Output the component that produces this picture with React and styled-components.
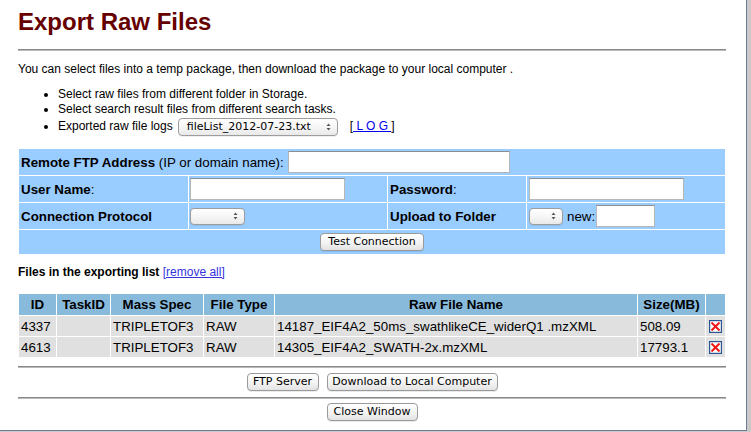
import React from "react";
import styled, { createGlobalStyle } from "styled-components";

const Global = createGlobalStyle`
  html, body { margin: 0; padding: 0; background: #c9c9c9; }
  body { font-family: "Liberation Sans", Arial, Helvetica, sans-serif; color: #000; }
`;

const Frame = styled.div`
  box-sizing: border-box;
  width: 747px;
  height: 431px;
  background: #fff;
  border-right: 1px solid #6e7c94;
  border-bottom: 1px solid #6e7c94;
  padding: 0 20px 0 18px;
  overflow: hidden;
`;

const Title = styled.h1`
  margin: 0;
  padding-top: 8px;
  font: bold 24px/28px "Liberation Sans", Arial, sans-serif;
  color: #660000;
`;

const Rule = styled.hr`
  margin: ${(p) => p.$top}px 0 0;
  height: 0;
  border: 0;
  border-top: 1px solid #8a8a8a;
  border-bottom: 1px solid #b9b9b9;
`;

const Intro = styled.p`
  margin: 11px 0 0;
  font-size: 12px;
  line-height: 15px;
`;

const BulletList = styled.ul`
  margin: 10px 0 0;
  padding-left: 40px;
  font-size: 12px;
  line-height: 15px;
  list-style: disc;
`;

const Bullet = styled.li`
  line-height: ${(p) => (p.$tall ? 19 : 15)}px;
`;

const Popup = styled.span`
  display: inline-flex;
  align-items: center;
  justify-content: space-between;
  box-sizing: border-box;
  width: ${(p) => p.$w}px;
  height: ${(p) => p.$h}px;
  margin-left: ${(p) => p.$ml || 0}px;
  padding: 0 6px 0 8px;
  border: 1px solid #9d9d9d;
  border-radius: 4px;
  background: linear-gradient(#ffffff, #f6f6f6 50%, #e9e9e9);
  font: 11px/1 "DejaVu Sans", Verdana, sans-serif;
  color: #000;
  vertical-align: middle;
  box-shadow: 0 1px 0 rgba(0, 0, 0, 0.06);
`;

const PopupText = styled.span`
  white-space: nowrap;
`;

const Arrows = () => (
  <svg width="5" height="8" viewBox="0 0 5 8" style={{ marginLeft: "auto" }}>
    <path d="M2.5 0.5 L4.5 3 L0.5 3 Z" fill="#555" />
    <path d="M2.5 7.5 L4.5 5 L0.5 5 Z" fill="#555" />
  </svg>
);

const LogLink = styled.span`
  margin-left: 12px;
`;

const Link = styled.a`
  color: ${(p) => p.$color || "#0000ee"};
  text-decoration: underline;
  cursor: pointer;
`;

const FormGrid = styled.div`
  margin-top: 12px;
  display: grid;
  grid-template-columns: 169px 198px 138px 1fr;
  grid-template-rows: 26px 26px 26px 24px;
  gap: 1px;
  padding: 1px;
  background: #fff;
  font-size: 13.33px;
`;

const Cell = styled.div`
  background: #99ccff;
  display: flex;
  align-items: center;
  justify-content: ${(p) => (p.$center ? "center" : "flex-start")};
  padding: 0 2px 0 ${(p) => (p.$pl != null ? p.$pl : 2)}px;
  grid-column: ${(p) => (p.$span ? "1 / -1" : "auto")};
  white-space: nowrap;
`;

const Strong = styled.b`
  font-weight: bold;
`;

const TextInput = styled.input`
  box-sizing: border-box;
  width: ${(p) => p.$w}px;
  height: 22px;
  margin: 0 0 0 ${(p) => p.$ml || 0}px;
  padding: 0 2px;
  border: 1px solid #b7b7b7;
  border-top-color: #8f8f8f;
  background: #fff;
  font: 12px "Liberation Sans", Arial, sans-serif;
`;

const NewLabel = styled.span`
  margin-left: 4px;
  margin-right: 1px;
`;

const MacButton = styled.button`
  box-sizing: border-box;
  width: ${(p) => p.$w}px;
  height: 18px;
  padding: 0;
  border: 1px solid #9a9a9a;
  border-radius: 4px;
  background: linear-gradient(#ffffff, #f3f3f3 55%, #e3e3e3);
  font: 11px/16px "DejaVu Sans", Verdana, sans-serif;
  color: #000;
  white-space: nowrap;
  box-shadow: 0 1px 0 rgba(0, 0, 0, 0.08);
`;

const ListHeading = styled.div`
  margin-top: 10px;
  font-size: 12px;
  line-height: 15px;
`;

const DataTable = styled.table`
  margin-top: 13px;
  width: 708px;
  border-collapse: separate;
  border-spacing: 1px;
  table-layout: fixed;
  font-size: 13.33px;
`;

const Th = styled.th`
  background: #88badc;
  height: 21px;
  padding: 0 2px;
  font-weight: bold;
  text-align: center;
  white-space: nowrap;
`;

const Td = styled.td`
  background: #e0e0e0;
  height: 20px;
  padding: 0 2px;
  white-space: nowrap;
  text-align: ${(p) => (p.$center ? "center" : "left")};
  line-height: 0;
  & > span { line-height: 15px; }
`;

const DeleteIcon = () => (
  <svg width="13" height="13" viewBox="0 0 13 13" style={{ verticalAlign: "middle" }}>
    <rect x="0.6" y="0.6" width="11.8" height="11.8" fill="#fff" stroke="#2b5590" strokeWidth="1.2" />
    <path d="M3.2 3.2 L9.8 9.8 M9.8 3.2 L3.2 9.8" stroke="#f01818" strokeWidth="2" strokeLinecap="square" />
  </svg>
);

const ButtonRow = styled.div`
  margin-top: ${(p) => p.$top}px;
  display: flex;
  justify-content: center;
  gap: 8px;
`;

const files = [
  { id: "4337", task: "", ms: "TRIPLETOF3", type: "RAW", name: "14187_EIF4A2_50ms_swathlikeCE_widerQ1 .mzXML", size: "508.09" },
  { id: "4613", task: "", ms: "TRIPLETOF3", type: "RAW", name: "14305_EIF4A2_SWATH-2x.mzXML", size: "17793.1" },
];

export default function App() {
  return (
    <>
      <Global />
      <Frame>
        <Title>Export Raw Files</Title>
        <Rule $top={13} />
        <Intro>
          You can select files into a temp package, then download the package to your local computer .
        </Intro>
        <BulletList>
          <Bullet>Select raw files from different folder in Storage.</Bullet>
          <Bullet>Select search result files from different search tasks.</Bullet>
          <Bullet $tall>
            Exported raw file logs
            <Popup $w={160} $h={18} $ml={5}>
              <PopupText>fileList_2012-07-23.txt</PopupText>
              <Arrows />
            </Popup>
            <LogLink>
              [<Link> L O G </Link>]
            </LogLink>
          </Bullet>
        </BulletList>

        <FormGrid>
          <Cell $span>
            <Strong>Remote FTP Address</Strong>&nbsp;(IP or domain name):
            <TextInput $w={222} $ml={4} />
          </Cell>
          <Cell>
            <Strong>User Name</Strong>:
          </Cell>
          <Cell $pl={1}>
            <TextInput $w={155} />
          </Cell>
          <Cell>
            <Strong>Password</Strong>:
          </Cell>
          <Cell>
            <TextInput $w={155} />
          </Cell>
          <Cell>
            <Strong>Connection Protocol</Strong>
          </Cell>
          <Cell $pl={1}>
            <Popup $w={55} $h={17}>
              <Arrows />
            </Popup>
          </Cell>
          <Cell>
            <Strong>Upload to Folder</Strong>
          </Cell>
          <Cell>
            <Popup $w={34} $h={17}>
              <Arrows />
            </Popup>
            <NewLabel>new:</NewLabel>
            <TextInput $w={59} />
          </Cell>
          <Cell $span $center>
            <MacButton $w={104}>Test Connection</MacButton>
          </Cell>
        </FormGrid>

        <ListHeading>
          <Strong>Files in the exporting list</Strong> <Link $color="#3333dd">[remove all]</Link>
        </ListHeading>

        <DataTable>
          <colgroup>
            <col style={{ width: 37 }} />
            <col style={{ width: 53 }} />
            <col style={{ width: 92 }} />
            <col style={{ width: 70 }} />
            <col style={{ width: 362 }} />
            <col style={{ width: 67 }} />
            <col style={{ width: 19 }} />
          </colgroup>
          <thead>
            <tr>
              <Th>ID</Th>
              <Th>TaskID</Th>
              <Th>Mass Spec</Th>
              <Th>File Type</Th>
              <Th>Raw File Name</Th>
              <Th>Size(MB)</Th>
              <Th />
            </tr>
          </thead>
          <tbody>
            {files.map((f) => (
              <tr key={f.id}>
                <Td><span>{f.id}</span></Td>
                <Td><span>{f.task}</span></Td>
                <Td><span>{f.ms}</span></Td>
                <Td><span>{f.type}</span></Td>
                <Td><span>{f.name}</span></Td>
                <Td><span>{f.size}</span></Td>
                <Td $center><DeleteIcon /></Td>
              </tr>
            ))}
          </tbody>
        </DataTable>

        <Rule $top={8} />
        <ButtonRow $top={5}>
          <MacButton $w={72}>FTP Server</MacButton>
          <MacButton $w={171}>Download to Local Computer</MacButton>
        </ButtonRow>
        <Rule $top={6} />
        <ButtonRow $top={4}>
          <MacButton $w={91}>Close Window</MacButton>
        </ButtonRow>
      </Frame>
    </>
  );
}
